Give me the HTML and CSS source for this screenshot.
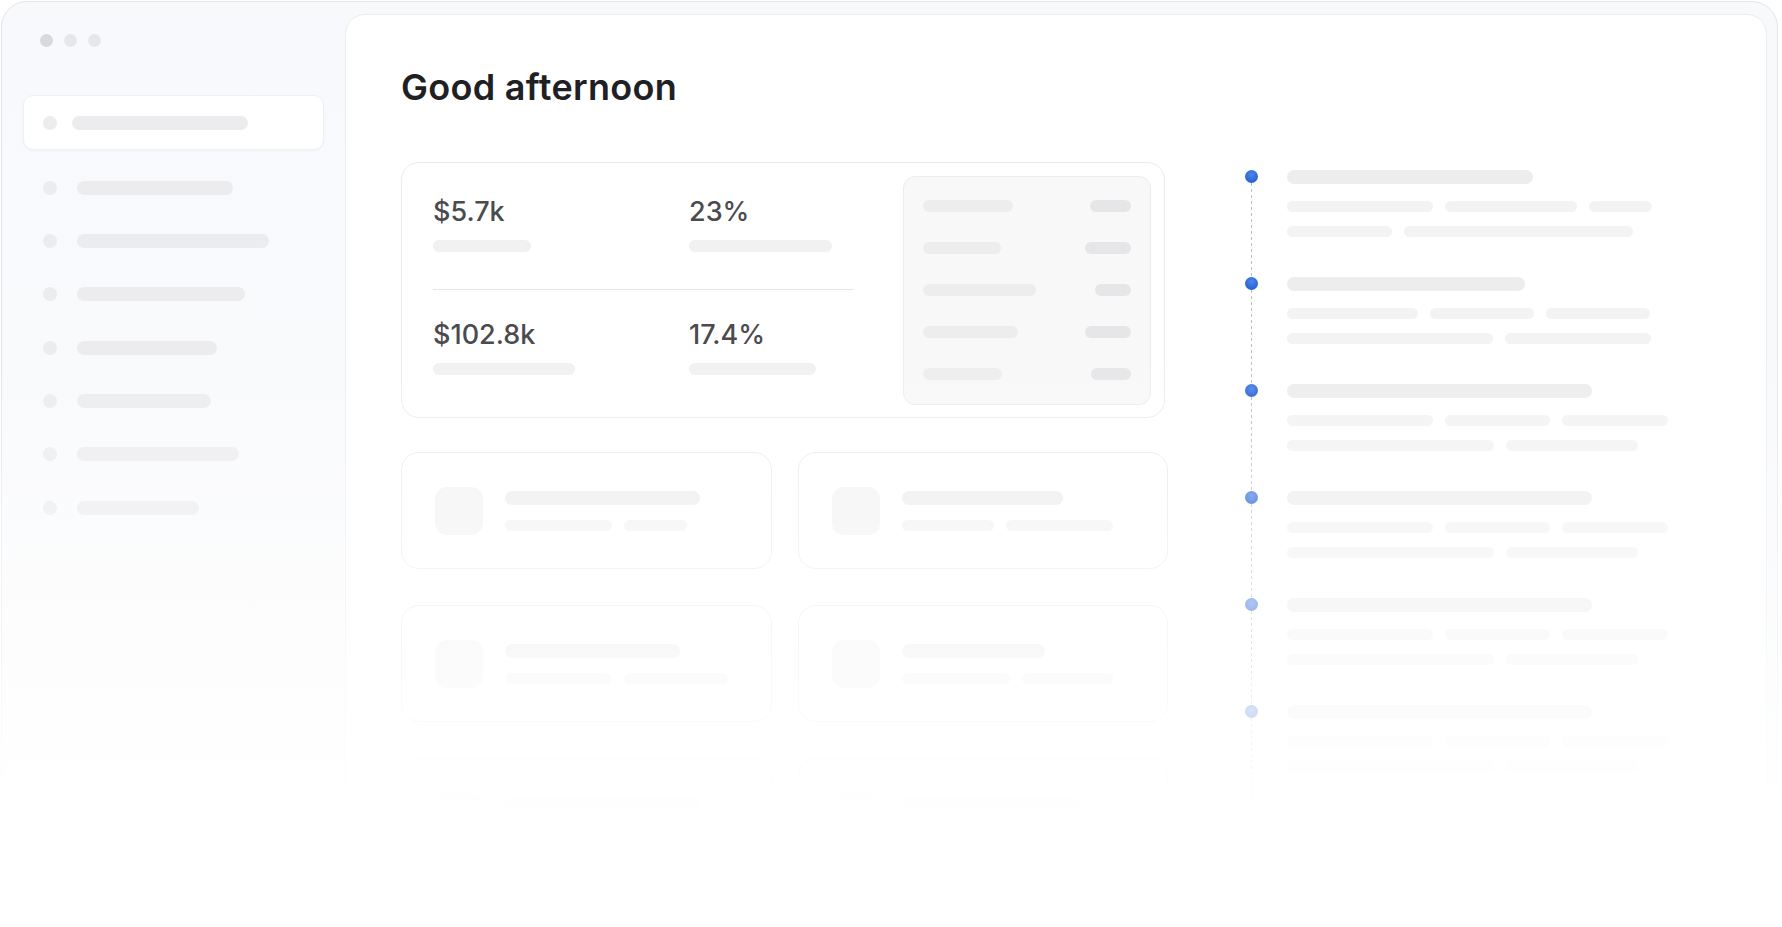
FILE: index.html
```html
<!DOCTYPE html>
<html lang="en">
<head>
<meta charset="utf-8">
<title>Dashboard</title>
<link rel="stylesheet" href="styles.css">
</head>
<body>
<div class="page">
  <div class="frame">
    <aside class="sidebar">
      <div class="traffic">
        <span class="tl tl-first"></span>
        <span class="tl"></span>
        <span class="tl"></span>
      </div>
      <div class="nav-active">
        <span class="nav-dot"></span>
        <span class="bar bar-nav" style="width:176px"></span>
      </div>
      <ul class="nav">
        <li class="nav-row"><span class="nav-dot"></span><span class="bar bar-nav" style="width:156px"></span></li>
        <li class="nav-row"><span class="nav-dot"></span><span class="bar bar-nav" style="width:192px"></span></li>
        <li class="nav-row"><span class="nav-dot"></span><span class="bar bar-nav" style="width:168px"></span></li>
        <li class="nav-row"><span class="nav-dot"></span><span class="bar bar-nav" style="width:140px"></span></li>
        <li class="nav-row"><span class="nav-dot"></span><span class="bar bar-nav" style="width:134px"></span></li>
        <li class="nav-row"><span class="nav-dot"></span><span class="bar bar-nav" style="width:162px"></span></li>
        <li class="nav-row"><span class="nav-dot"></span><span class="bar bar-nav" style="width:122px"></span></li>
      </ul>
    </aside>

    <main class="panel">
      <h1 class="greeting">Good afternoon</h1>
      <div class="content">
        <div class="left">
          <section class="stats">
            <div class="stats-grid">
              <div class="stat-row">
                <div class="stat">
                  <div class="value">$5.7k</div>
                  <span class="bar bar-stat" style="width:98px"></span>
                </div>
                <div class="stat">
                  <div class="value">23%</div>
                  <span class="bar bar-stat" style="width:143px"></span>
                </div>
              </div>
              <div class="divider"></div>
              <div class="stat-row stat-row-2">
                <div class="stat">
                  <div class="value">$102.8k</div>
                  <span class="bar bar-stat" style="width:142px"></span>
                </div>
                <div class="stat">
                  <div class="value">17.4%</div>
                  <span class="bar bar-stat" style="width:127px"></span>
                </div>
              </div>
            </div>
            <div class="subcard">
              <div class="sub-row"><span class="bar bar-sub" style="width:90px"></span><span class="bar bar-pill" style="width:41px"></span></div>
              <div class="sub-row"><span class="bar bar-sub" style="width:78px"></span><span class="bar bar-pill" style="width:46px"></span></div>
              <div class="sub-row"><span class="bar bar-sub" style="width:113px"></span><span class="bar bar-pill" style="width:36px"></span></div>
              <div class="sub-row"><span class="bar bar-sub" style="width:95px"></span><span class="bar bar-pill" style="width:46px"></span></div>
              <div class="sub-row"><span class="bar bar-sub" style="width:79px"></span><span class="bar bar-pill" style="width:40px"></span></div>
            </div>
          </section>

          <div class="cards">
            <div class="card">
              <span class="card-icon"></span>
              <div class="card-text">
                <span class="bar bar-title" style="width:195px"></span>
                <div class="card-sub"><span class="bar bar-line" style="width:107px"></span><span class="bar bar-line" style="width:63px"></span></div>
              </div>
            </div>
            <div class="card">
              <span class="card-icon"></span>
              <div class="card-text">
                <span class="bar bar-title" style="width:161px"></span>
                <div class="card-sub"><span class="bar bar-line" style="width:92px"></span><span class="bar bar-line" style="width:107px"></span></div>
              </div>
            </div>
            <div class="card">
              <span class="card-icon"></span>
              <div class="card-text">
                <span class="bar bar-title" style="width:175px"></span>
                <div class="card-sub"><span class="bar bar-line" style="width:107px"></span><span class="bar bar-line" style="width:104px"></span></div>
              </div>
            </div>
            <div class="card">
              <span class="card-icon"></span>
              <div class="card-text">
                <span class="bar bar-title" style="width:143px"></span>
                <div class="card-sub"><span class="bar bar-line" style="width:108px"></span><span class="bar bar-line" style="width:91px"></span></div>
              </div>
            </div>
            <div class="card">
              <span class="card-icon"></span>
              <div class="card-text">
                <span class="bar bar-title" style="width:195px"></span>
                <div class="card-sub"><span class="bar bar-line" style="width:107px"></span><span class="bar bar-line" style="width:70px"></span></div>
              </div>
            </div>
            <div class="card">
              <span class="card-icon"></span>
              <div class="card-text">
                <span class="bar bar-title" style="width:177px"></span>
                <div class="card-sub"><span class="bar bar-line" style="width:96px"></span><span class="bar bar-line" style="width:100px"></span></div>
              </div>
            </div>
          </div>
        </div>

        <ol class="timeline">
          <li class="tl-item">
            <div class="tl-rail"><span class="tl-dot"></span><span class="tl-line"></span></div>
            <div class="tl-body">
              <span class="bar bar-title" style="width:246px"></span>
              <div class="tl-sub"><span class="bar bar-line" style="width:146px"></span><span class="bar bar-line" style="width:132px"></span><span class="bar bar-line" style="width:63px"></span></div>
              <div class="tl-sub tl-sub-2"><span class="bar bar-line" style="width:105px"></span><span class="bar bar-line" style="width:229px"></span></div>
            </div>
          </li>
          <li class="tl-item">
            <div class="tl-rail"><span class="tl-dot"></span><span class="tl-line"></span></div>
            <div class="tl-body">
              <span class="bar bar-title" style="width:238px"></span>
              <div class="tl-sub"><span class="bar bar-line" style="width:131px"></span><span class="bar bar-line" style="width:104px"></span><span class="bar bar-line" style="width:104px"></span></div>
              <div class="tl-sub tl-sub-2"><span class="bar bar-line" style="width:206px"></span><span class="bar bar-line" style="width:146px"></span></div>
            </div>
          </li>
          <li class="tl-item">
            <div class="tl-rail"><span class="tl-dot"></span><span class="tl-line"></span></div>
            <div class="tl-body">
              <span class="bar bar-title" style="width:305px"></span>
              <div class="tl-sub"><span class="bar bar-line" style="width:146px"></span><span class="bar bar-line" style="width:105px"></span><span class="bar bar-line" style="width:106px"></span></div>
              <div class="tl-sub tl-sub-2"><span class="bar bar-line" style="width:207px"></span><span class="bar bar-line" style="width:132px"></span></div>
            </div>
          </li>
          <li class="tl-item">
            <div class="tl-rail"><span class="tl-dot"></span><span class="tl-line"></span></div>
            <div class="tl-body">
              <span class="bar bar-title" style="width:305px"></span>
              <div class="tl-sub"><span class="bar bar-line" style="width:146px"></span><span class="bar bar-line" style="width:105px"></span><span class="bar bar-line" style="width:106px"></span></div>
              <div class="tl-sub tl-sub-2"><span class="bar bar-line" style="width:207px"></span><span class="bar bar-line" style="width:132px"></span></div>
            </div>
          </li>
          <li class="tl-item">
            <div class="tl-rail"><span class="tl-dot"></span><span class="tl-line"></span></div>
            <div class="tl-body">
              <span class="bar bar-title" style="width:305px"></span>
              <div class="tl-sub"><span class="bar bar-line" style="width:146px"></span><span class="bar bar-line" style="width:105px"></span><span class="bar bar-line" style="width:106px"></span></div>
              <div class="tl-sub tl-sub-2"><span class="bar bar-line" style="width:207px"></span><span class="bar bar-line" style="width:132px"></span></div>
            </div>
          </li>
          <li class="tl-item tl-item-last">
            <div class="tl-rail"><span class="tl-dot"></span><span class="tl-line"></span></div>
            <div class="tl-body">
              <span class="bar bar-title" style="width:305px"></span>
              <div class="tl-sub"><span class="bar bar-line" style="width:146px"></span><span class="bar bar-line" style="width:105px"></span><span class="bar bar-line" style="width:106px"></span></div>
              <div class="tl-sub tl-sub-2"><span class="bar bar-line" style="width:207px"></span><span class="bar bar-line" style="width:132px"></span></div>
            </div>
          </li>
        </ol>
      </div>
    </main>
  </div>
  <div class="fade"></div>
</div>
</body>
</html>
```

FILE: styles.css
```css
html, body {
  margin: 0;
  padding: 0;
  height: 927px;
  overflow: hidden;
  background: #ffffff;
  font-family: Inter, "Liberation Sans", Arial, sans-serif;
}

.page {
  position: relative;
  height: 927px;
  overflow: hidden;
}

.frame {
  box-sizing: border-box;
  margin: 1px 4px 0 1px;
  height: 1000px;
  border: 1px solid #e3e5ea;
  border-radius: 26px;
  background: #f8f9fb;
  display: grid;
  grid-template-columns: 343px 1fr;
  padding: 12px 10px 0 0;
}

/* ---------- sidebar ---------- */
.sidebar {
  padding: 20px 21px 0 21px;
  background: linear-gradient(to bottom, #f8f9fc 0%, #f9fafc 50%, #fbfbfc 100%);
  border-top-left-radius: 26px;
}

.traffic {
  display: flex;
  gap: 11px;
  padding-left: 17px;
  height: 13px;
}

.tl {
  width: 13px;
  height: 13px;
  border-radius: 50%;
  background: #e7e7ea;
}

.tl-first {
  background: #d9d9dc;
}

.bar {
  display: block;
  flex: none;
  border-radius: 999px;
}

.nav-dot {
  flex: none;
  width: 14px;
  height: 14px;
  border-radius: 50%;
  background: #ececee;
}

.bar-nav {
  height: 14px;
  background: #ececee;
}

.nav-active {
  box-sizing: border-box;
  margin-top: 48px;
  height: 55px;
  border: 1px solid #eef0f3;
  border-radius: 10px;
  background: #ffffff;
  box-shadow: 0 1px 2px rgba(20, 30, 60, 0.03);
  display: flex;
  align-items: center;
  gap: 15px;
  padding-left: 19px;
}

.nav {
  list-style: none;
  margin: 11px 0 0 0;
  padding: 0;
}

.nav-row {
  height: 53.33px;
  display: flex;
  align-items: center;
  gap: 20px;
  padding-left: 20px;
}

/* ---------- main panel ---------- */
.panel {
  box-sizing: border-box;
  background: #ffffff;
  border: 1px solid #eaecef;
  border-radius: 20px;
  padding: 51px 0 0 55px;
  min-width: 0;
}

.greeting {
  margin: 0;
  font-size: 36px;
  line-height: 43px;
  font-weight: 600;
  letter-spacing: 0.3px;
  color: #1f2023;
}

.content {
  margin-top: 53px;
  display: grid;
  grid-template-columns: 767px 1fr;
  column-gap: 77px;
  align-items: start;
}

/* stats card */
.stats {
  box-sizing: border-box;
  width: 764px;
  height: 256px;
  border: 1px solid #ebebed;
  border-radius: 18px;
  display: flex;
  padding: 13px 13px 12px 31px;
}

.stats-grid {
  width: 421px;
  padding-top: 21px;
}

.stat-row {
  display: grid;
  grid-template-columns: 256px 1fr;
}

.stat-row-2 {
  margin-top: 30px;
}

.value {
  font-size: 27px;
  line-height: 30px;
  font-weight: 500;
  color: #4b4b4e;
}

.bar-stat {
  margin-top: 13px;
  height: 12px;
  background: #f1f1f2;
}

.divider {
  margin-top: 37px;
  height: 1px;
  background: #e6e6e8;
}

.subcard {
  box-sizing: border-box;
  margin-left: 49px;
  width: 248px;
  height: 229px;
  background: #f8f8f9;
  border: 1px solid #ececee;
  border-radius: 12px;
  padding: 23px 19px 0 19px;
  display: flex;
  flex-direction: column;
  gap: 30px;
}

.sub-row {
  display: flex;
  justify-content: space-between;
  align-items: center;
  height: 12px;
}

.bar-sub {
  height: 12px;
  background: #ededee;
}

.bar-pill {
  height: 12px;
  background: #e6e6e8;
}

/* small cards */
.cards {
  margin-top: 34px;
  display: grid;
  grid-template-columns: 1fr 1fr;
  column-gap: 26px;
  row-gap: 36px;
}

.card {
  box-sizing: border-box;
  height: 117px;
  border: 1px solid #eaeaec;
  border-radius: 18px;
  padding: 34px 0 0 33px;
  display: flex;
  gap: 22px;
}

.card-icon {
  flex: none;
  width: 48px;
  height: 48px;
  border-radius: 12px;
  background: #f3f3f4;
}

.card-text {
  padding-top: 4px;
}

.bar-title {
  height: 14px;
  background: #ededee;
}

.bar-line {
  height: 11px;
  background: #f3f3f4;
}

.card-sub {
  margin-top: 15px;
  display: flex;
  gap: 12px;
}

/* timeline */
.timeline {
  list-style: none;
  margin: 0;
  padding: 8px 0 0 0;
}

.tl-item {
  display: grid;
  grid-template-columns: 13px 1fr;
  column-gap: 29px;
  height: 107px;
}

.tl-item-last {
  height: 140px;
}

.tl-rail {
  display: flex;
  flex-direction: column;
  align-items: center;
}

.tl-dot {
  flex: none;
  width: 13px;
  height: 13px;
  border-radius: 50%;
  background: radial-gradient(circle at 50% 35%, #4d86ea 0%, #2d64d4 65%, #2657c2 100%);
}

.tl-line {
  flex: 1;
  width: 1px;
  background-image: linear-gradient(to bottom, #bcbdc2 50%, rgba(255, 255, 255, 0) 50%);
  background-size: 1px 6px;
}

.tl-sub {
  margin-top: 17px;
  display: flex;
  gap: 12px;
}

.tl-sub-2 {
  margin-top: 14px;
}

/* bottom fade */
.fade {
  position: absolute;
  inset: 0;
  pointer-events: none;
  background: linear-gradient(to bottom, rgba(255, 255, 255, 0) 350px, #ffffff 820px);
}
```
